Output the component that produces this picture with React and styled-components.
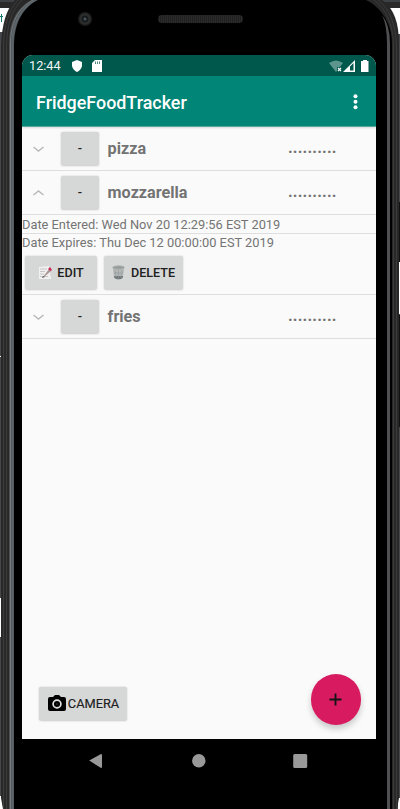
import React from "react";
import styled, { createGlobalStyle } from "styled-components";

const Global = createGlobalStyle`
  *{box-sizing:border-box}
  body{margin:0;background:#3c3d40;font-family:Roboto,sans-serif;overflow:hidden}
`;
const Scene = styled.div`
  position:relative;width:400px;height:809px;overflow:hidden;background:#45474b;
`;
const Backdrop = styled.svg`position:absolute;inset:0;`;
const Phone = styled.div`
  position:relative;height:809px;padding:0 24px 0 22px;display:flex;flex-direction:column;
`;
const Bezel = styled.div`
  height:55px;flex:none;display:flex;align-items:flex-start;padding:11px 0 0 56px;
`;
const Lens = styled.div`
  width:14px;height:14px;margin-top:1px;border-radius:50%;
  background:radial-gradient(circle,#405356 0 1px,#18191b 2px 3px,#2d2e30 4px 5px,#1c1c1c 6px);
`;
const Speaker = styled.div`
  width:85px;height:8px;margin:4px 0 0 66px;border-radius:4px;
  background:repeating-linear-gradient(90deg,#202020 0 1px,#2c2c2c 1px 2px);
`;
const Screen = styled.main`
  width:354px;height:684px;flex:none;background:#fafafa;border-radius:11px 11px 0 0;overflow:hidden;
  display:flex;flex-direction:column;
`;
const StatusBar = styled.div`
  height:21px;flex:none;background:#00574b;color:#f2f6f5;display:flex;align-items:center;
  padding:1px 7px 0 7px;font-size:12.7px;
`;
const Time = styled.span`width:43px;margin-top:-1px;white-space:nowrap;`;
const Spacer = styled.div`flex:1;`;
const AppBar = styled.header`
  height:51px;flex:none;background:#008577;color:#fff;display:flex;align-items:center;
  padding:2px 18px 0 14px;justify-content:space-between;border-bottom:1px solid #56a79e;
  box-shadow:0 1px 2px #0002;
`;
const Title = styled.h1`margin:0;padding-top:2px;font-size:17.9px;font-weight:500;line-height:24px;white-space:nowrap;`;
const Row = styled.div`
  height:44px;flex:none;border-bottom:1px solid #dedede;display:flex;align-items:flex-start;
  padding:5px 0 0 10px;
`;
const Chevron = styled.svg`width:13px;height:8px;margin:13px 16px 0 0;`;
const Button = styled.button`
  width:${p => p.$w}px;height:33px;flex:none;border:0;border-radius:2px;padding:0;background:#d6d7d7;
  box-shadow:0 0.5px 2px #0003;color:#202020;font:500 12.6px Roboto,sans-serif;
  display:flex;align-items:center;justify-content:center;gap:${p => p.$gap || 0}px;white-space:nowrap;
`;
const CameraButton = styled(Button)`
  font-weight:400;font-size:12.8px;-webkit-text-stroke:0.15px #202020;padding-left:1px;
`;
const Name = styled.span`
  width:180px;margin:6px 0 0 8.6px;color:#737373;font-size:16.2px;line-height:22px;font-weight:700;
`;
const Dots = styled.span`
  margin:5px 0 0 0.4px;color:#737373;font-size:16.3px;line-height:22px;font-weight:700;letter-spacing:0.14px;
`;
const Detail = styled.div`
  height:${p => p.$h}px;flex:none;font-size:12.83px;line-height:${p => p.$line ? 20 : 18}px;color:#747474;white-space:nowrap;
  border-bottom:${p => p.$line ? "1px solid #dedede" : "0"};
`;
const Actions = styled.div`
  height:44px;flex:none;padding:5px 0 0 3px;display:flex;gap:7px;border-bottom:1px solid #dedede;
`;
const Footer = styled.footer`
  display:flex;justify-content:space-between;align-items:flex-start;margin-top:auto;
  padding:0 15px 14px 17px;height:65px;
`;
const CameraSlot = styled.div`padding-top:13px;`;
const Fab = styled.button`
  width:50.5px;height:50.5px;border:0;border-radius:50%;background:#d81b60;padding:0;display:grid;place-items:center;
  box-shadow:0 4px 6px #0003;
`;
const NavBar = styled.nav`
  flex:1;display:flex;padding:14px 0 0 66px;align-items:flex-start;
`;
const NavIcon = styled.svg`width:16px;height:16px;margin-right:${p => p.$gap || 0}px;`;

function Frame() {
  return (
    <Backdrop width="400" height="809" aria-hidden="true">
      <path d="M0 8H12V32H0zM389 7H400V34H389z" fill="#fff" />
      <path d="M0 0H400V2H0z" fill="#3f4245" />
      <path d="M0 2H400V8H0z" fill="#292929" />
      <path d="M0 16.5H3M1.5 14V22" stroke="#147a70" />
      <path d="M0 356.5H1" stroke="#fff" />
      <path d="M0 598H1V637H0zM0 796H3V809H0zM398 798H400V809H398z" fill="#fff" />
      <path d="M1 798V46C2 24 6 10 15 0H382C394 8 399 23 399 44V798L397 809H3z" fill="#282828" />
      <path d="M3.5 809V46C4 24 9 10 18 0" stroke="#3d3d3d" fill="none" />
      <path d="M6.5 809V46C7 24 12 10 22 0" stroke="#3c3c3c" fill="none" />
      <path d="M9 809V46C9 22 16 8 32 0H38V809z" fill="#4c5053" />
      <path d="M10.5 809V46C10 23 18 8 33 0" stroke="#777b7d" fill="none" />
      <path d="M12.5 809V46C12 23 21 8 36 0" stroke="#5d666d" strokeWidth="2" fill="none" />
      <path d="M14 809V46C14 24 22 8 38 0H366C382 8 392 24 392 44V809z" fill="#000" />
      <path d="M387 809V44Q387 25 382 15Q390 25 390 44V809z" fill="#505053" />
      <path d="M393.5 809V44C393 24 386 9 374 0M396.5 809V44C395 24 390 9 378 0" stroke="#3b3b3b" fill="none" />
      <path d="M399.5 202V262M399.5 315V427" stroke="#111" />
      <path d="M399.5 262V314" stroke="#fff" />
    </Backdrop>
  );
}

function FoodRow({ name, open }) {
  return (
    <Row>
      <Chevron viewBox="0 0 13 8">
        <path d={open ? "M1.5 6L6.5 2L11.5 6" : "M1.5 2L6.5 6L11.5 2"} stroke="#b9b9b9" strokeWidth="1.5" fill="none" />
      </Chevron>
      <Button $w={38}>-</Button>
      <Name>{name}</Name>
      <Dots>..........</Dots>
    </Row>
  );
}

export default function App() {
  return (
    <>
      <Global />
      <Scene>
        <Frame />
        <Phone>
          <Bezel><Lens /><Speaker /></Bezel>
          <Screen>
            <StatusBar>
              <Time>12:44</Time>
              <svg width="30" height="12" viewBox="0 0 30 12" fill="#fff">
                <path d="M5 0L10 2V6Q9 10 5 12Q1 10 0 6V2zM23 0H30V12H20V3z" />
                <path d="M23.5 1.5V4M25.5 1.5V4M27.5 1.5V4" stroke="#00574b" strokeWidth=".7" />
              </svg>
              <Spacer />
              <svg width="40" height="13" viewBox="0 0 40 13">
                <path d="M0 3Q7-2 14 3L7 12z" fill="#5b958d" />
                <path d="M8 7H13V12H8z" fill="#00574b" />
                <path d="M9 8L12 11M12 8L9 11" stroke="#fff" strokeWidth="1.2" />
                <path d="M26 0V12H14z" fill="#fff" />
                <path d="M21 6.5L24.5 3V10.5H21z" fill="#00574b" />
                <path d="M34 0H38V1H39.5V12H32V1H34z" fill="#fff" />
              </svg>
            </StatusBar>
            <AppBar>
              <Title>FridgeFoodTracker</Title>
              <svg width="5" height="16" viewBox="0 0 5 16" fill="#fff">
                <circle cx="2.5" cy="2.2" r="2" /><circle cx="2.5" cy="7.7" r="2" /><circle cx="2.5" cy="13.2" r="2" />
              </svg>
            </AppBar>
            <FoodRow name="pizza" />
            <FoodRow name="mozzarella" open />
            <Detail $h={19} $line>Date Entered: Wed Nov 20 12:29:56 EST 2019</Detail>
            <Detail $h={17}>Date Expires: Thu Dec 12 00:00:00 EST 2019</Detail>
            <Actions>
              <Button $w={72} $gap={4}>
                <svg width="15" height="14" viewBox="0 0 15 14">
                  <path d="M1 1L11 0L13 13H1z" fill="#f1f1f1" />
                  <path d="M2 3H9M2 5.5H7M2 8H6M2 10.5H10" stroke="#bbb" strokeWidth=".8" />
                  <path d="M5 11L11 3L13 5L6 11z" fill="#aa9792" />
                  <path d="M10 3L12 1L14 4L12.5 5z" fill="#cf2859" />
                  <path d="M4 12L5 10L7 11z" fill="#555" />
                </svg>EDIT
              </Button>
              <Button $w={79} $gap={6}>
                <svg width="13" height="15" viewBox="0 0 13 15">
                  <path d="M.8 3H12.2L10.8 13Q6.5 16 2.2 13z" fill="#b4b9b8" />
                  <path d="M2 11H11L10.6 13Q6.5 15.5 2.4 13z" fill="#70787b" />
                  <path d="M3 5L4 13M6.5 5V14M10 5L9 13M2 8H11" stroke="#92999a" strokeWidth=".6" />
                  <ellipse cx="6.5" cy="2.5" rx="5.8" ry="1.7" fill="#949b99" stroke="#b1b6b5" />
                </svg>DELETE
              </Button>
            </Actions>
            <FoodRow name="fries" />
            <Footer>
              <CameraSlot>
                <CameraButton $w={88} $gap={2}>
                  <svg width="18" height="17" viewBox="0 0 18 17">
                    <path d="M2 2H5L7 0H11L13 2H16Q18 2 18 4V14Q18 16 16 16H2Q0 16 0 14V4Q0 2 2 2z" fill="#000" />
                    <circle cx="9" cy="9" r="3.9" fill="#000" stroke="#e1e2e2" strokeWidth="1.7" />
                    <circle cx="9" cy="9" r="1" fill="#292929" />
                  </svg>CAMERA
                </CameraButton>
              </CameraSlot>
              <Fab aria-label="Add">
                <svg width="13" height="13"><path d="M6.5 .5V12.5M.5 6.5H12.5" stroke="#151515" strokeWidth="1.9" /></svg>
              </Fab>
            </Footer>
          </Screen>
          <NavBar>
            <NavIcon $gap={88} viewBox="0 0 16 16"><path d="M1.2 7.5L13 1Q14 1 14 2V14Q14 15 13 15z" fill="#999" /></NavIcon>
            <NavIcon $gap={85} viewBox="0 0 16 16"><circle cx="6.8" cy="7.7" r="6.7" fill="#999" /></NavIcon>
            <NavIcon viewBox="0 0 16 16"><rect x="0.2" y="1" width="14" height="14" rx="1.5" fill="#999" /></NavIcon>
          </NavBar>
        </Phone>
      </Scene>
    </>
  );
}
